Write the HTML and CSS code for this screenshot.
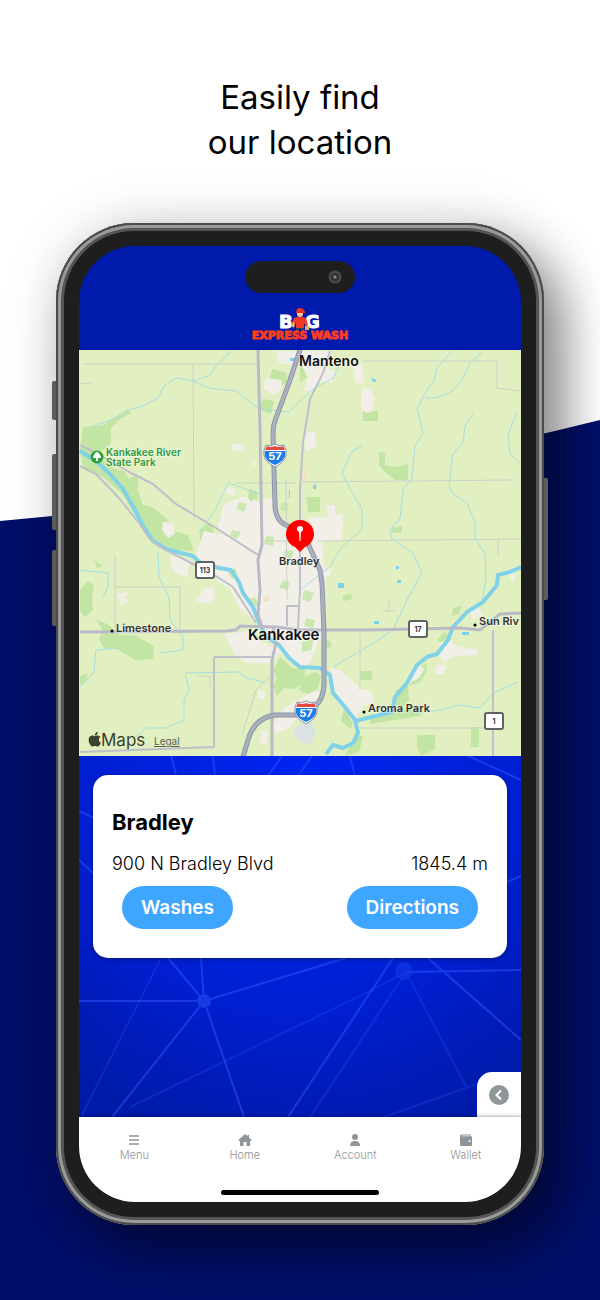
FILE: index.html
```html
<!DOCTYPE html>
<html lang="en">
<head>
    <meta charset="UTF-8">
    <meta name="viewport" content="width=device-width, initial-scale=1.0">
    <title>BIG Express Wash - Locations</title>
    <link rel="stylesheet" href="styles.css">
</head>
<body>
    <svg class="backdrop" viewBox="0 0 600 1300" preserveAspectRatio="none" aria-hidden="true">
        <path d="M0 521Q300 495 600 420V1300H0z" fill="#000f68"/>
    </svg>

    <h1 class="headline">Easily find<br>our location</h1>

    <main class="phone">
        <span class="phone__key phone__key--mute"></span>
        <span class="phone__key phone__key--up"></span>
        <span class="phone__key phone__key--down"></span>
        <span class="phone__key phone__key--power"></span>

        <div class="screen">
            <header class="app-header">
                <div class="island"><span class="island__lens"></span></div>
                <svg class="logo" viewBox="0 0 104 36" role="img" aria-label="BIG Express Wash">
                    <g class="logo__big">
                        <text x="31" y="21">B</text>
                        <text x="57" y="21">G</text>
                    </g>
                    <!-- mascot -->
                    <path d="M48 20h8v6h-3v-4h-2v4h-3z" fill="#33405c"/>
                    <path d="M46 11q6-3 12 0l2 7-2 2-2-4v5h-8v-5l-3 3-2-2z" fill="#f23a24"/>
                    <circle cx="52" cy="7" r="3" fill="#f2c4a0"/>
                    <path d="M48 6q0-5 4-5t5 4v1z" fill="#e8331c"/>
                    <path d="M43 17l3-2 1 4-2 2zM57 19h4v4h-4z" fill="#e2b36b"/>
                    <text class="logo__sub" x="52" y="32" text-anchor="middle">EXPRESS WASH</text>
                </svg>
            </header>

            <section class="map" aria-label="Map">
                <svg class="map__svg" viewBox="79 350 442 406" preserveAspectRatio="xMidYMid slice">
                    <rect x="-400" y="350" width="1400" height="406" fill="#e1efc1"/>

                    <!-- woods -->
                    <g fill="#c3e5a4">
                        <path d="M83 427l20-2 10-7 14-8 5 3-12 6-9 9v15l-14 12-17-5z"/>
                        <path d="M80 448l18 6 14 14 12 3 5 8 9-5v16l4 14 12 4 13 11 7 12 14 4 6 16-26-2-15-9-13-17-18-29-20-18-18-6z"/>
                        <path d="M80 590l8-9 6 4-2 13 1 12-8 7-5-6zM96 619l13 6 10 10 18 1 17 11-1 12-18 1-16-10-16-3-4-8 4-8z"/>
                        <path d="M363 411h15v10h-15zM379 452l6 1v12l11 2 12-3v16h-13l-10-8-6-7zM306 497h14v15h-12zM391 528l11-2v6l-10 1z"/>
                        <path d="M272 369l14 4 2 10-12 4-6-7zM262 399l12 2-3 13-12-4zM300 360l10 4-6 8 6 4-10 6z"/>
                        <path d="M200 530l10-8 4 10-2 18-12 4zM249 489l8 2v12l-9-3zM264 508l8 2v10l-8 4zM244 526l10 2-3 10-9-4z"/>
                        <path d="M264 596l8-3 14 3-3 9-14 1-7-5zM231 643l10-8 9 7-8 4zM322 643l8-3 2 7-9 2zM342 596l8-2 3 5-9 2z"/>
                        <path d="M280 657l12 11 13 1-1 14-10 6-10-1-7 8-4-10 4-8-4-8zM303 678l12-6 6 4-4 16-10 2-8-4z"/>
                        <path d="M360 671h12v9h-12zM396 690l12-6 1 16-7 8-8-4zM421 666l6-3-1 10-7 10-9 2zM344 708l9 12-2 9-10-8zM370 715l24-4 20-6 10 2-4 9-50 8z"/>
                        <path d="M417 735h18v14l-14 7-4-9zM471 727h8v20h-8zM355 735l8 1-4 16-14 4zM453 608l9-2-3 8-7 2zM437 640l8-9 3 5-6 7zM80 676l8-3-2 9-6 3zM94 560l9 6-6 2z"/>
                    </g>

                    <!-- built-up areas -->
                    <g fill="#f2efe8">
                        <path d="M276 351h22l-5 14-14-2zM302 351h30l-9 15 12 6-3 10h-12l-8 10-8-2 4-12-6-12zM265 378l17 2-1 10-7 5-10-6zM362 389l8-2 5 11-3 14-7 1-4-8zM303 433l12-1 1 15-10 4z"/>
                        <path d="M263 498l12 2 4 20 12 8 10-8 8 6 20-10 14-2-1 26-20 1 4 40-4 52-12 30-10 6-12-10-18-16-10-20-20-14-10-20-24-16-10-20 8-22 20 4 24 8 4-22-6-12 8-10 10 6z"/>
                        <path d="M224 504l22-8 9 10-2 20 6 22-18 4-20-12-3-15zM225 486l9 2 2 8-9-2zM232 444h12v7h-12zM163 522l10 1 2 11-7 4-6-8zM253 457l4 6-4 4z"/>
                        <path d="M170 556l20 4-3 17-14-5zM195 600l10-12 8-2 2 13-9 5zM117 594l10-2-2 6 4 3-8 5zM224 634l24-3 12 10 20 10-8 12-26 0-12-10z"/>
                        <path d="M330 667l10 3 20 18 12 4 2 11-10 3-12 16-6-12-11-10zM441 642l10-1 6 6 20 2v6l-22 1-11 6-6-7zM409 683l10-17 6 2-6 10zM436 665h10l-2 9h-9zM469 606l11 2 3 7-11 4zM508 573l7 1-1 10-3-5zM316 690l4 2-6 12-10 4-14 20-14 6-4-8 12-18z"/>
                        <path d="M321 571l11-3-2 8-7 2zM352 365h10l2 18h-8zM326 505h9v14l-6 2zM308 517h28v20l-20 4zM258 690l8 2-2 8-7-2zM261 730l8 2-3 14-6-4z"/>
                    </g>
                    <g fill="#cbe8b0">
                        <path d="M282 502l7 2-2 8-7-2zM266 536l8 1-1 9-9-2zM283 580l7 2-3 8-8-2zM228 572l7-4 3 7-6 4zM304 590l10 3-4 9-8-3zM306 618l9 2-2 8-9-2zM239 502l8 2-3 8-7-3zM232 530l9 2-4 7-7-3zM302 642l12-3-3 11-9 2zM285 550l9 1-3 8-8-2zM247 600l8-3 4 8-7 4z"/>
                    </g>
                    <path d="M297 726l14-4 5 10-5 12-12-2-6-8z" fill="#dbe2e4"/>
                    <path d="M303 466l3 3-1 12h-3zM263 598l5-2 1 5-5 1z" fill="#f6dfc0"/>

                    <!-- creeks -->
                    <g class="creek">
                        <path d="M231 351L216 366 209 376 193 381 176 378 164 386 158 398 143 406 126 411 116 418 93 426M193 381L209 388 236 391 259 409 289 412 313 389 333 378 342 360"/>
                        <path d="M259 494L229 483 223 493 216 509 206 523 199 533"/>
                        <path d="M452 351L437 368 435 379 425 393 417 409 423 433 415 446 412 479 403 489 400 519 390 529 392 539 413 553 422 573 407 600 393 630 367 647 333 667"/>
                        <path d="M482 353L470 363 463 378Q450 400 425 398"/>
                        <path d="M473 414L465 426 463 443 453 454 449 486 453 494 467 503 475 523 475 538 485 554 486 580 482 600M517 411L508 436 510 454 520 463"/>
                        <path d="M362 446L352 451 342 473 350 489 362 509 362 529 340 549 330 567 300 590"/>
                        <path d="M158 553L159 577 169 597 170 620 183 637 183 650 159 653M80 687L94 672 96 650 118 648M80 570L108 573 108 587 103 598"/>
                        <path d="M136 737L146 728 166 728 184 720 184 700 189 690 185 673 239 672 246 678 264 682M518 682L493 693 480 708 460 705 440 710 417 713"/>
                    </g>
                    <g fill="#7fd0ec">
                        <path d="M338 583h6v5h-6zM396 566h3v3h-3zM397 580h4v3h-4zM374 621h5v3h-5zM372 378l4 2v2l-4-1zM313 486l3-2v5h-3zM462 632h7v3h-7zM290 358h5v3h-5zM289 490h1v8h-1zM261 717h6v3h-6z"/>
                    </g>

                    <!-- minor roads -->
                    <g class="lane">
                        <path d="M83 364H258M193 363L194 520M363 361H497V388L520 391M303 482L513 480M317 541L521 539M80 384L91 383M236 483H296"/>
                        <path d="M115 555V630M115 587H180V630M360 630V690M360 728H487M498 540V556M389 600V611M382 611H396M262 541H300M286 480L287 600M210 687V676H197M242 735L256 690 270 676"/>
                    </g>

                    <!-- river -->
                    <path class="river" d="M80 451L96 461 109 473 123 489 133 506 143 526 153 541 166 549 193 556 199 562 219 568 231 570 239 582 243 593 253 607 258 620 266 637 279 645 289 658 300 667 320 668 330 675 333 693 345 707 355 720 358 733 353 743 343 748 333 745 326 754"/>
                    <path class="river" d="M355 721L380 715 392 712 395 697 407 683 417 665 427 657 437 654 448 640 453 627 467 612 483 602 497 585 498 575 510 572 521 567"/>

                    <!-- roads -->
                    <g class="road">
                        <path d="M80 445L96 453 129 472 153 484 176 504 216 528 258 555M80 466L96 474 119 498 139 523 149 538 159 546 189 562 219 578 233 587 246 607 256 623"/>
                        <path d="M330 351L323 373 310 399 303 443 300 489V590L298 628M214 657H271M214 657V747L80 752M493 630V756M287 626V606H300"/>
                    </g>
                    <g class="road road--wide">
                        <path d="M258 350L260 430 262 545 258 560 260 590 258 615 262 626"/>
                        <path d="M80 632L226 631 236 630 240 626 276 627 300 630 367 630 460 628 480 630 490 622 500 614 521 613M276 643L272 660V756M273 627L276 643"/>
                    </g>
                    <path class="freeway-edge" d="M300 350L289 383 276 418Q273 425 273 433L275 506Q276 522 288 526 304 532 310 548L320 570 322 583 324 633V683Q324 700 313 708L300 715H275Q254 718 248 740L243 757"/>
                    <path class="freeway" d="M300 350L289 383 276 418Q273 425 273 433L275 506Q276 522 288 526 304 532 310 548L320 570 322 583 324 633V683Q324 700 313 708L300 715H275Q254 718 248 740L243 757"/>

                    <!-- shields -->
                    <defs>
                        <g id="interstate">
                            <path d="M-9-10Q-4-8 0-11 4-8 9-10 12-5 11 0 10 7 0 12-10 7-11 0-12-5-9-10z" fill="#fff" stroke="#8a93a6"/>
                            <path d="M-8-9Q-4-7 0-9 4-7 8-9L10-5H-10z" fill="#e5483f"/>
                            <path d="M-10-4H10Q12 5 0 10-12 5-10-4z" fill="#1e7bea"/>
                        </g>
                        <g id="route">
                            <rect x="-10" y="-9" width="20" height="18" rx="3" fill="#5f6264"/>
                            <rect x="-8" y="-7" width="16" height="14" rx="1" fill="#fff"/>
                        </g>
                    </defs>
                    <use href="#interstate" x="275" y="455"/>
                    <use href="#interstate" x="306" y="712"/>
                    <g class="shield">
                        <text x="275" y="460">57</text>
                        <text x="306" y="717">57</text>
                    </g>
                    <use href="#route" x="205" y="570"/>
                    <use href="#route" x="418" y="629"/>
                    <use href="#route" x="494" y="721"/>
                    <g class="route-no">
                        <text x="205" y="573">113</text>
                        <text x="418" y="632">17</text>
                        <text x="494" y="724">1</text>
                    </g>

                    <!-- places -->
                    <g class="place place--city">
                        <text x="299" y="366">Manteno</text>
                        <text class="place--large" x="248" y="640">Kankakee</text>
                    </g>
                    <g class="place">
                        <text x="279" y="565">Bradley</text>
                        <text x="116" y="632">Limestone</text>
                        <text x="368" y="712">Aroma Park</text>
                        <text x="479" y="625">Sun Riv</text>
                    </g>
                    <circle cx="112" cy="631" r="1.5"/>
                    <circle cx="364" cy="712" r="1.5"/>
                    <circle cx="475" cy="625" r="1.5"/>

                    <g class="park">
                        <text x="106" y="456">Kankakee River</text>
                        <text x="106" y="466">State Park</text>
                    </g>
                    <circle cx="97" cy="457" r="6.5" fill="#30a13a"/>
                    <path d="M96 461v-3h-2q-2-1 0-3 1-3 3-3t3 3q2 2 0 3h-2v3z" fill="#fff"/>

                    <!-- current wash -->
                    <path d="M300 552l-5-5a14 14 0 1 1 10 0z" fill="#fe0000"/>
                    <circle cx="300" cy="529" r="3" fill="#fff"/>
                    <path d="M299 530h2l-.5 11h-1z" fill="#fff"/>

                    <g fill="#39412f">
                        <path transform="translate(88.5 731) scale(.0325)" d="M318.7 268.7c-.2-36.7 16.4-64.4 50-84.8-18.8-26.9-47.2-41.7-84.7-44.6-35.5-2.8-74.3 20.7-88.5 20.7-15 0-49.4-19.7-76.4-19.7C63.3 141.2 4 184.8 4 273.5q0 39.3 14.4 81.2c12.8 36.7 59 126.7 107.2 125.2 25.2-.6 43-17.9 75.8-17.9 31.8 0 48.3 17.9 76.4 17.9 48.6-.7 90.4-82.5 102.6-119.3-65.2-30.7-61.7-90-61.7-91.9zm-56.6-164.2c27.3-32.4 24.8-61.9 24-72.5-24.1 1.4-52 16.4-67.9 34.9-17.5 19.8-27.8 44.3-25.6 71.9 26.1 2 49.9-11.4 69.5-34.3z"/>
                        <text class="map__brand" x="101" y="746">Maps</text>
                    </g>
                    <a href="#legal"><text class="map__legal" x="154" y="745">Legal</text></a>
                </svg>
            </section>

            <section class="details">
                <svg class="details__mesh" viewBox="79 756 442 361" preserveAspectRatio="xMidYMid slice" aria-hidden="true">
                    <g fill="none" stroke="#3157ff">
                        <path opacity=".5" stroke-width="2" d="M168 958L204 1001 201 958M79 1001H204L346 958M204 1001L112 1117M204 1001L244 1117M393 958L288 1117M428 958L521 1040M406 972L521 970"/>
                        <path opacity=".25" stroke-width="2" d="M160 960L82 1115M130 1107L372 990 406 972 310 1117M406 972L468 1090M384 1117L477 1084"/>
                        <path opacity=".5" stroke-width="2" d="M171 756Q174 765 176 776M213 756L215 776M282 756L268 776M350 756L355 776M468 756L521 780M79 811L94 818M79 860L94 874M521 876L507 882M312 756L298 776"/>
                    </g>
                    <circle cx="204" cy="1001" r="7" fill="#173be0"/>
                    <circle cx="404" cy="971" r="9" fill="#123ae0" opacity=".6"/>
                </svg>

                <article class="card">
                    <h2 class="card__title">Bradley</h2>
                    <div class="card__row">
                        <span>900 N Bradley Blvd</span>
                        <span>1845.4 m</span>
                    </div>
                    <div class="card__actions">
                        <button class="pill" type="button">Washes</button>
                        <button class="pill" type="button">Directions</button>
                    </div>
                </article>

                <button class="drawer" type="button" aria-label="Back">
                    <svg viewBox="0 0 20 20" width="20" height="20">
                        <circle cx="10" cy="10" r="10" fill="#8f9699"/>
                        <path d="M12 5.500L7.500 10l4.500 4.500" fill="none" stroke="#fff" stroke-width="2"/>
                    </svg>
                </button>
            </section>

            <nav class="tabs">
                <a class="tabs__item" href="#menu">
                    <svg viewBox="0 0 14 14"><path d="M2 3h10M2 7h10M2 11h10" fill="none" stroke="currentColor" stroke-width="1.3"/></svg>
                    Menu
                </a>
                <a class="tabs__item" href="#home">
                    <svg viewBox="0 0 14 14"><path d="M7 1l2.5 2.2V2H11v2.500L13.500 7v1H12v5H8.500V9h-3v4H2V8H.5V7z" fill="currentColor"/></svg>
                    Home
                </a>
                <a class="tabs__item" href="#account">
                    <svg viewBox="0 0 14 14"><circle cx="7" cy="4" r="3" fill="currentColor"/><path d="M2 13q0-5 5-5t5 5z" fill="currentColor"/></svg>
                    Account
                </a>
                <a class="tabs__item" href="#wallet">
                    <svg viewBox="0 0 14 14"><path fill-rule="evenodd" d="M2.500 1.500H12v1H3v.7h9q1 0 1 .8v8q0 1-1 1H2q-1 0-1-1V3q0-1.500 1.500-1.500zM10.500 7a1 1 0 1 0 .1 0z" fill="currentColor"/></svg>
                    Wallet
                </a>
            </nav>
            <span class="home-bar"></span>
        </div>
    </main>
</body>
</html>
```
FILE: styles.css
```css
* {
    box-sizing: border-box;
}

body {
    margin: 0;
    min-height: 100vh;
    position: relative;
    background: #fff;
    color: #000;
    font-family: Inter, "Liberation Sans", sans-serif;
    overflow-x: hidden;
}

.backdrop {
    position: absolute;
    top: 0;
    left: 0;
    width: 100%;
    height: 100%;
    z-index: -1;
}

.headline {
    margin: 0;
    padding: 75px 20px 58px;
    font-size: 33px;
    line-height: 45px;
    font-weight: 400;
    text-align: center;
}

/* phone */
.phone {
    position: relative;
    margin: 0 56px 75px;
    padding: 23px;
    border-radius: 78px;
    background: #1e1e1e;
    box-shadow:
        inset 0 0 0 2px #4b4b4b,
        inset 0 0 0 5px #999b9b,
        inset 0 0 0 8px #555,
        20px 24px 50px rgba(0, 0, 0, 0.45),
        0 0 60px rgba(0, 0, 0, 0.12);
}

.phone__key {
    position: absolute;
    left: -4px;
    width: 4px;
    height: 76px;
    border-radius: 2px 0 0 2px;
    background: #5c5c5c;
}

.phone__key--mute { top: 158px; height: 39px; }
.phone__key--up { top: 231px; }
.phone__key--down { top: 327px; }

.phone__key--power {
    top: 255px;
    left: auto;
    right: -4px;
    height: 122px;
    border-radius: 0 2px 2px 0;
}

.screen {
    position: relative;
    overflow: hidden;
    border-radius: 56px;
}

/* header */
.app-header {
    height: 104px;
    padding-top: 15px;
    display: flex;
    flex-direction: column;
    align-items: center;
    gap: 14px;
    background: #001aac;
}

.island {
    width: 110px;
    height: 32px;
    padding: 0 13px;
    display: flex;
    align-items: center;
    justify-content: flex-end;
    border-radius: 16px;
    background: #1e1e1e;
}

.island__lens {
    width: 14px;
    height: 14px;
    border-radius: 50%;
    background: radial-gradient(circle, #8a8a8a 0 1px, #333 2px 4px, #555 5px, #2a2a2a 7px);
}

.logo {
    width: 104px;
    height: 36px;
    flex: none;
}

.logo text {
    font-family: "DejaVu Sans", sans-serif;
    font-weight: 700;
}

.logo__big {
    font-size: 18px;
    fill: #fff;
    stroke: #fff;
}

.logo__sub {
    font-size: 11px;
    fill: #ff3d1c;
    stroke: #ff3d1c;
}

/* map */
.map__svg {
    display: block;
    width: 100%;
    height: 406px;
}

.creek,
.lane,
.road,
.river,
.freeway,
.freeway-edge {
    fill: none;
    stroke-linejoin: round;
}

.creek { stroke: #a5dfe0; }
.lane { stroke: #ccd2c8; }
.river { stroke: #80d2e8; stroke-width: 4px; }
.road { stroke: #bfc0c9; stroke-width: 2px; }
.road--wide { stroke: #b9bac6; stroke-width: 3px; }
.freeway-edge { stroke: #8e96a8; stroke-width: 5px; }
.freeway { stroke: #a9b0c0; stroke-width: 3px; }

.place,
.park {
    font-size: 11px;
    font-weight: 600;
    fill: #333;
    stroke: rgba(255, 255, 255, 0.4);
    stroke-width: 2px;
    paint-order: stroke;
}

.place--city {
    font-size: 14px;
    fill: #111;
}

.place--large {
    font-size: 15px;
}

.park {
    font-size: 10px;
    fill: #2f9a3a;
}

.shield,
.route-no {
    font-size: 11px;
    font-weight: 700;
    text-anchor: middle;
    fill: #fff;
}

.route-no {
    font-size: 7px;
    fill: #333;
}

.map__brand {
    font-size: 17px;
}

.map__legal {
    font-size: 10px;
    fill: #5a6050;
    text-decoration: underline;
}

/* location details */
.details {
    position: relative;
    min-height: 361px;
    padding: 19px 14px;
    background: radial-gradient(ellipse 80% 100% at 50% 10%, #0025f4 0%, #001fd2 60%, #001aa8 100%);
}

.details__mesh {
    position: absolute;
    top: 0;
    left: 0;
    width: 100%;
    height: 100%;
}

.card {
    position: relative;
    min-height: 183px;
    padding: 31px 19px 0;
    border-radius: 15px;
    background: #fff;
    box-shadow: 0 1px 4px rgba(0, 0, 0, 0.4);
}

.card__title {
    margin: 0 0 13px;
    font-size: 22px;
    line-height: 32px;
    font-weight: 700;
}

.card__row {
    display: flex;
    justify-content: space-between;
    font-size: 18px;
    line-height: 26px;
    font-weight: 300;
}

.card__actions {
    display: flex;
    justify-content: space-between;
    padding: 9px 10px 0;
}

.pill {
    height: 43px;
    padding: 0 19px;
    border: 0;
    border-radius: 22px;
    background: #3ea6ff;
    color: #fff;
    font: 600 19px/24px Inter, "Liberation Sans", sans-serif;
}

.drawer {
    position: absolute;
    right: 0;
    bottom: 0;
    width: 44px;
    height: 45px;
    padding: 0;
    display: flex;
    align-items: center;
    justify-content: center;
    border: 0;
    border-radius: 15px 0 0 0;
    background: #fff;
}

/* bottom tabs */
.tabs {
    position: relative;
    height: 85px;
    padding-top: 16px;
    display: grid;
    grid-template-columns: repeat(4, 1fr);
    background: #fff;
    box-shadow: 0 -1px 3px rgba(0, 0, 0, 0.3);
}

.tabs__item {
    display: flex;
    flex-direction: column;
    align-items: center;
    gap: 1px;
    color: #8e9498;
    font-size: 11px;
    line-height: 14px;
    font-weight: 300;
    text-decoration: none;
}

.tabs__item svg {
    width: 14px;
    height: 14px;
}

/* system indicator, floats over the tabs */
.home-bar {
    position: absolute;
    bottom: 7px;
    left: 50%;
    width: 158px;
    height: 5px;
    margin-left: -79px;
    border-radius: 3px;
    background: #000;
}
```
